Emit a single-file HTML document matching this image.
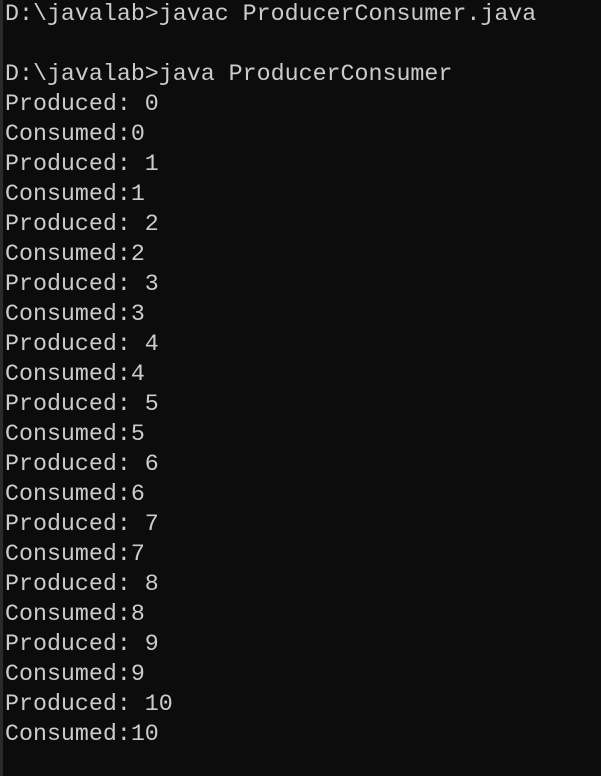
<!DOCTYPE html>
<html><head><meta charset="utf-8"><style>
html,body{margin:0;padding:0;background:#0c0c0c;width:601px;height:776px;overflow:hidden}
.bar{position:absolute;left:0;top:0;width:3px;height:776px;background:#2a2a2a}
pre{position:absolute;left:5px;top:-1px;margin:0;font-family:"Liberation Mono",monospace;font-size:23.3px;line-height:30px;color:#cccccc}
</style></head><body><div class="bar"></div><pre>D:\javalab&gt;javac ProducerConsumer.java

D:\javalab&gt;java ProducerConsumer
Produced: 0
Consumed:0
Produced: 1
Consumed:1
Produced: 2
Consumed:2
Produced: 3
Consumed:3
Produced: 4
Consumed:4
Produced: 5
Consumed:5
Produced: 6
Consumed:6
Produced: 7
Consumed:7
Produced: 8
Consumed:8
Produced: 9
Consumed:9
Produced: 10
Consumed:10</pre></body></html>
